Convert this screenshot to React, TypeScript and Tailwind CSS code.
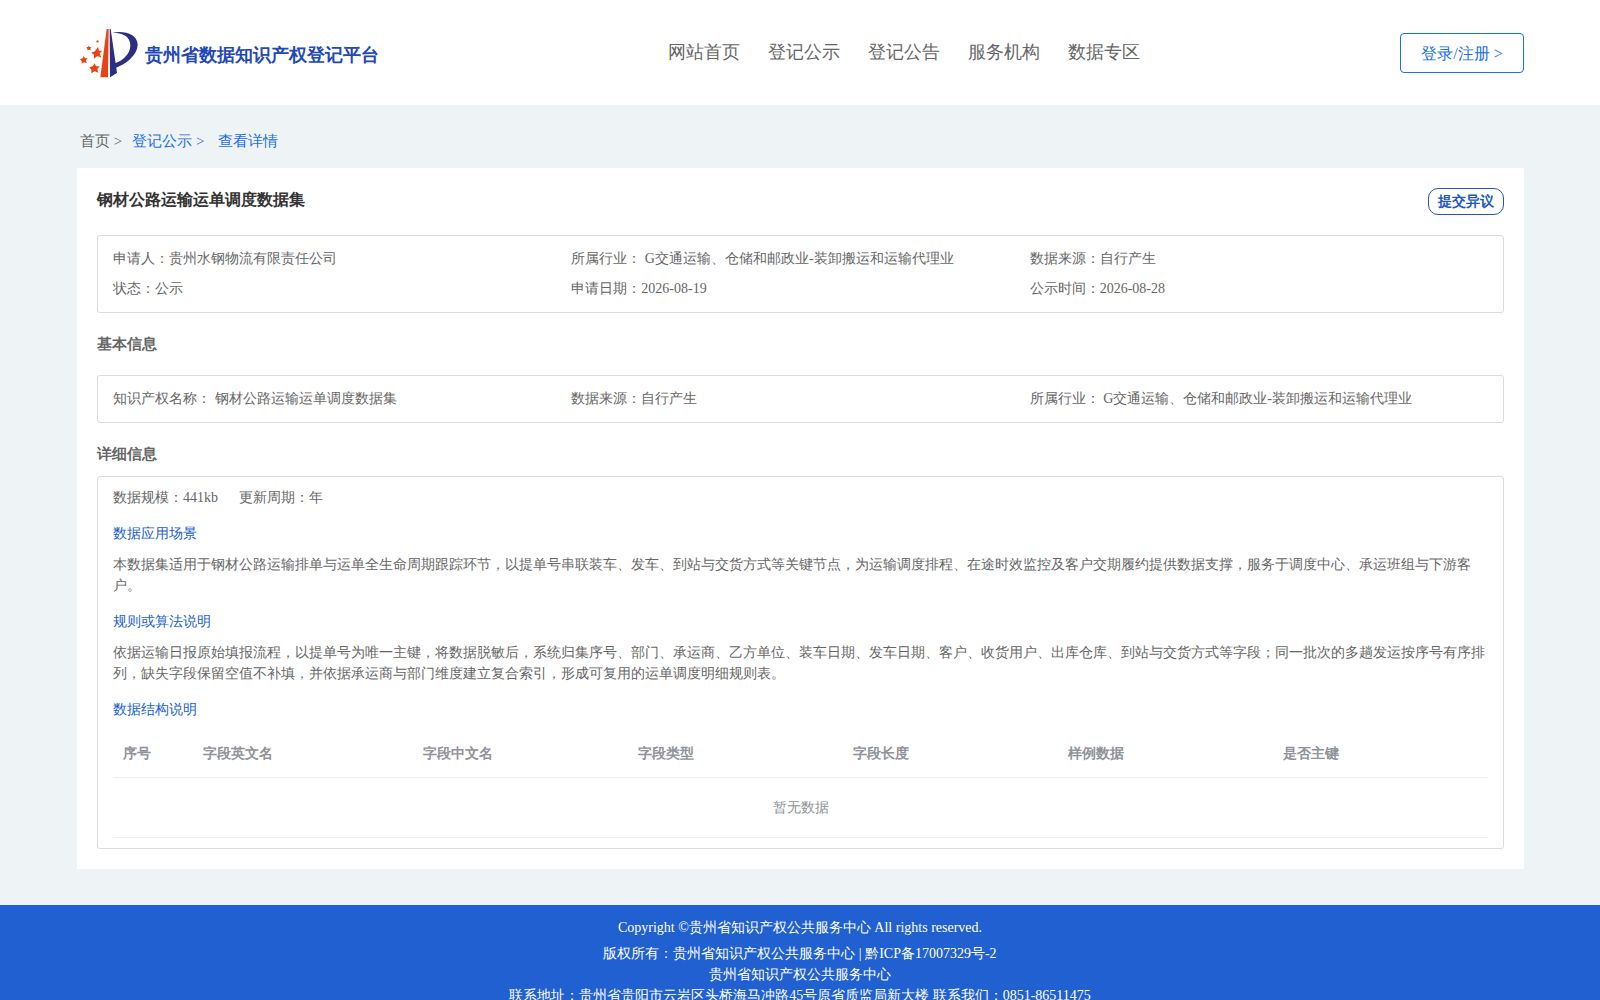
import type { ReactNode } from 'react';

const NAV_ITEMS = ['网站首页', '登记公示', '登记公告', '服务机构', '数据专区'];

const SUMMARY = [
  '申请人：贵州水钢物流有限责任公司',
  '所属行业： G交通运输、仓储和邮政业-装卸搬运和运输代理业',
  '数据来源：自行产生',
  '状态：公示',
  '申请日期：2026-08-19',
  '公示时间：2026-08-28',
];

const BASIC_INFO = [
  '知识产权名称： 钢材公路运输运单调度数据集',
  '数据来源：自行产生',
  '所属行业： G交通运输、仓储和邮政业-装卸搬运和运输代理业',
];

const COLUMNS = ['序号', '字段英文名', '字段中文名', '字段类型', '字段长度', '样例数据', '是否主键'];

function Logo() {
  return (
    <svg viewBox="60 54 174 150" className="h-[50px] w-[58px] shrink-0" aria-hidden>
      <g fill="#e64415">
        <path d="M140 57h6l-2 145h-23z" />
        <path d="M114 110l3 12 10 0-8 8 5 13-12-5-10 8 0-12-8-6 11-4z" />
        <path d="M104 160l4 9 11 0-7 8 3 11-11-4-10 6 0-11-6-7 10-3z" />
        <path d="M71 138l4 7 8 0-5 6 2 9-8-3-7 4 0-8-5-6 8-2z" />
        <path d="M86 107l3 4 5 0-3 4 1 6-5-2-5 2 0-5-3-4 5-1z" />
        <path d="M113 89l1 3 4 0-3 3 1 3-3-1-3 1 0-3-2-3 4 0z" />
      </g>
      <g fill="#2a2f83">
        <path d="M149 57h3l19 132-21 13z" />
        <path d="M157 68C194 61 231 72 233 103c0 32-35 60-67 71l-1-14c26-10 45-29 46-53 0-28-22-39-54-39z" />
      </g>
    </svg>
  );
}

function InfoBox({ items }: { items: string[] }) {
  return (
    <ul className="grid grid-cols-3 rounded-[3px] border border-[#dcdcdc] px-[15px] py-2 leading-[30px]">
      {items.map((item) => (
        <li key={item}>{item}</li>
      ))}
    </ul>
  );
}

function Section({ title, children }: { title: string; children: ReactNode }) {
  return (
    <section className="mt-[15px]">
      <h3 className="leading-[21px] text-[#2160d0]">{title}</h3>
      {children}
    </section>
  );
}

export default function App() {
  return (
    <div className="min-h-screen bg-[#eef3f6] font-['Liberation_Serif',serif] text-[14px] text-[#666]">
      <header className="bg-white pr-[76px] pl-[77px]">
        <div className="flex h-[105px] items-center justify-between">
          <a href="#" className="flex min-w-[330px] items-center gap-[7px] pl-[3px]">
            <Logo />
            <span className="pt-[6px] text-[18px] font-bold text-[#2348b8]">贵州省数据知识产权登记平台</span>
          </a>
          <nav className="flex gap-7 text-[18px]">
            {NAV_ITEMS.map((item) => (
              <a key={item} href="#">
                {item}
              </a>
            ))}
          </nav>
          <button
            type="button"
            className="h-10 w-[124px] rounded border border-[#1a6fee] bg-white pt-[2px] text-[16px] text-[#1a6fee]"
          >
            登录/注册 &gt;
          </button>
        </div>
      </header>

      <main className="pr-[76px] pb-9 pl-[77px]">
        <nav className="flex h-[63px] items-center pt-[10px] pl-[3px] text-[15px] text-[#1a6fee]">
          <a href="#" className="text-[#666]">
            首页 &gt;
          </a>
          <a href="#" className="ml-[10px]">
            登记公示 &gt;
          </a>
          <a href="#" className="ml-[14px]">
            查看详情
          </a>
        </nav>

        <article className="bg-white p-5">
          <div className="mb-5 flex items-start justify-between">
            <h1 className="text-[16px] leading-6 font-bold text-[#333]">钢材公路运输运单调度数据集</h1>
            <button
              type="button"
              className="h-[27px] w-[76px] rounded-[10px] border border-[#2058c0] font-bold text-[#2058c0]"
            >
              提交异议
            </button>
          </div>
          <InfoBox items={SUMMARY} />

          <h2 className="my-5 text-[15px] leading-[22px] font-bold">基本信息</h2>
          <InfoBox items={BASIC_INFO} />

          <h2 className="mt-5 mb-[11px] text-[15px] leading-[22px] font-bold">详细信息</h2>
          <div className="rounded-[3px] border border-[#dcdcdc] px-[15px] py-[10px] leading-[21px]">
            <p className="flex gap-[21px]">
              <span>数据规模：441kb</span>
              <span>更新周期：年</span>
            </p>
            <Section title="数据应用场景">
              <p className="mt-[10px]">
                本数据集适用于钢材公路运输排单与运单全生命周期跟踪环节，以提单号串联装车、发车、到站与交货方式等关键节点，为运输调度排程、在途时效监控及客户交期履约提供数据支撑，服务于调度中心、承运班组与下游客户。
              </p>
            </Section>
            <Section title="规则或算法说明">
              <p className="mt-[10px]">
                依据运输日报原始填报流程，以提单号为唯一主键，将数据脱敏后，系统归集序号、部门、承运商、乙方单位、装车日期、发车日期、客户、收货用户、出库仓库、到站与交货方式等字段；同一批次的多趟发运按序号有序排列，缺失字段保留空值不补填，并依据承运商与部门维度建立复合索引，形成可复用的运单调度明细规则表。
              </p>
            </Section>
            <Section title="数据结构说明">
              <table className="mt-[10px] w-full table-fixed text-left text-[#909399]">
                <colgroup>
                  <col className="w-20" />
                  <col className="w-[220px]" />
                  <col span={5} />
                </colgroup>
                <thead>
                  <tr className="h-[47px] border-b border-[#ebeef5]">
                    {COLUMNS.map((column) => (
                      <th key={column} scope="col" className="px-[10px] font-bold">
                        {column}
                      </th>
                    ))}
                  </tr>
                </thead>
                <tbody>
                  <tr className="h-[60px] border-b border-[#ebeef5]">
                    <td colSpan={COLUMNS.length} className="text-center">
                      暂无数据
                    </td>
                  </tr>
                </tbody>
              </table>
            </Section>
          </div>
        </article>
      </main>

      <footer className="bg-[#2160d0] py-3 text-center leading-[21px] text-white">
        <p className="mb-[5px]">Copyright ©贵州省知识产权公共服务中心 All rights reserved.</p>
        <p>版权所有：贵州省知识产权公共服务中心 | 黔ICP备17007329号-2</p>
        <p>贵州省知识产权公共服务中心</p>
        <p>联系地址：贵州省贵阳市云岩区头桥海马冲路45号原省质监局新大楼 联系我们：0851-86511475</p>
      </footer>
    </div>
  );
}
